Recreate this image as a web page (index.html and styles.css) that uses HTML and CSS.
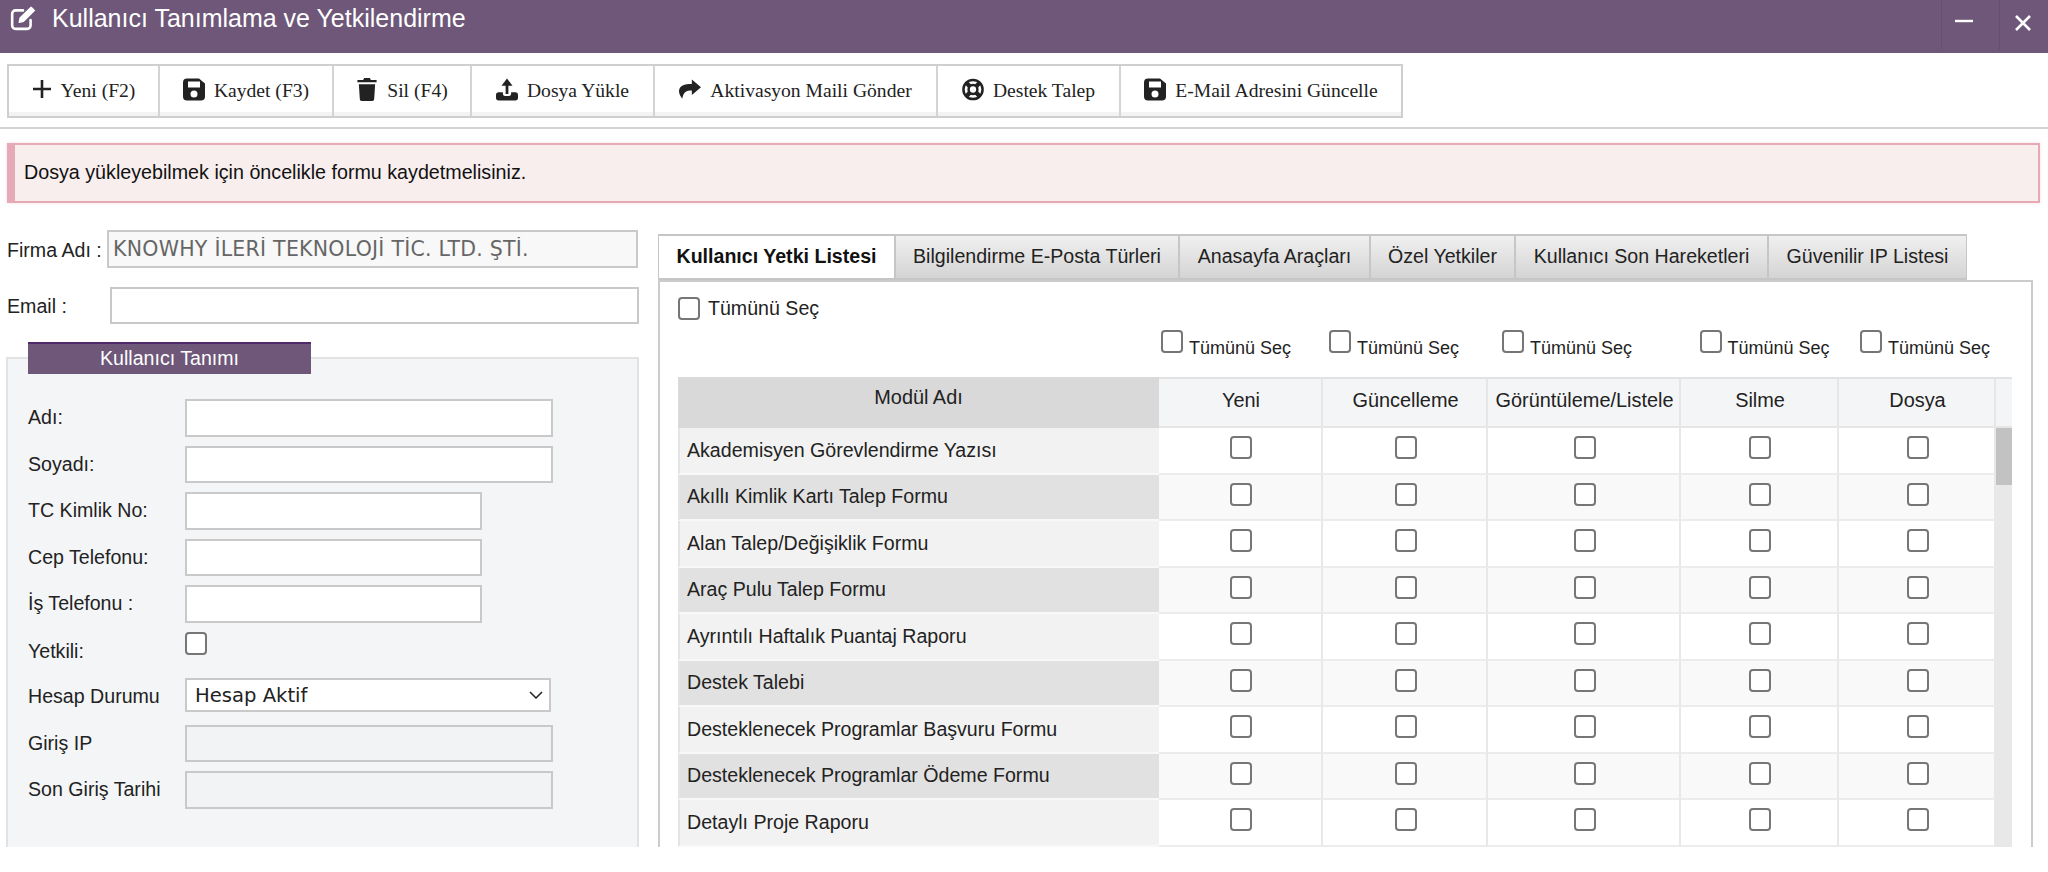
FILE: index.html
```html
<!DOCTYPE html>
<html lang="tr">
<head>
    <meta charset="UTF-8">
    <title>Kullanıcı Tanımlama ve Yetkilendirme</title>
    <link rel="stylesheet" href="styles.css">
</head>
<body>
<div class="page">
    <div class="title-bar">
        <svg class="title-icon" viewBox="0 0 24 24" fill="none" stroke="#fff" stroke-width="2.4" stroke-linecap="round" stroke-linejoin="round">
            <path d="M19 14v5a3 3 0 0 1-3 3H5a3 3 0 0 1-3-3V8a3 3 0 0 1 3-3h7"/>
            <path d="M8.5 16l.8-4L19.5 2l3 3L12.5 15z" fill="#fff" stroke-width="1.2"/>
        </svg>
        <span class="title-text">Kullanıcı Tanımlama ve Yetkilendirme</span>
        <div class="window-btns">
            <div class="window-btn"><svg viewBox="0 0 18 18" width="18" height="18"><path d="M0 9h18" stroke="#fff" stroke-width="2.4"/></svg></div>
            <div class="window-btn"><svg viewBox="0 0 16 16" width="16" height="16"><path d="M1 1l14 14M15 1L1 15" stroke="#fff" stroke-width="2.6"/></svg></div>
        </div>
    </div>

    <div class="toolbar">
        <a class="tool-btn">
            <svg class="ico ico-plus" viewBox="0 0 20 20"><path d="M10 1v18M1 10h18" stroke="#222" stroke-width="2.6"/></svg>
            Yeni (F2)
        </a>
        <a class="tool-btn">
            <svg class="ico" viewBox="0 0 22 22"><path fill="#222" fill-rule="evenodd" d="M4 0h12l6 5v13a4 4 0 0 1-4 4H4a4 4 0 0 1-4-4V4a4 4 0 0 1 4-4zm1 3v6h12V3zm6 9a3.500 3.500 0 1 0 0 7a3.500 3.500 0 0 0 0-7z"/></svg>
            Kaydet (F3)
        </a>
        <a class="tool-btn">
            <svg class="ico" viewBox="0 0 20 24"><path fill="#222" d="M7 0h6l1 2h6v2.500H0V2h6zM1.500 6.500h17L17.500 22a2 2 0 0 1-2 2h-11a2 2 0 0 1-2-2z"/></svg>
            Sil (F4)
        </a>
        <a class="tool-btn">
            <svg class="ico" viewBox="0 0 24 24"><path fill="#222" d="M12 0l6 8h-4.500v9h-3V8H6zM7.500 15v2a2 2 0 0 0 2 2h5a2 2 0 0 0 2-2v-2H21a3 3 0 0 1 3 3v3a3 3 0 0 1-3 3H3a3 3 0 0 1-3-3v-3a3 3 0 0 1 3-3z"/></svg>
            Dosya Yükle
        </a>
        <a class="tool-btn">
            <svg class="ico" viewBox="0 0 24 22"><path fill="#222" d="M14 0l10 8.500-10 8.500v-5c-6 0-9 1.500-10.500 9C1.500 18.500 0 15.500 0 13 0 7 6 5 14 5z"/></svg>
            Aktivasyon Maili Gönder
        </a>
        <a class="tool-btn">
            <svg class="ico" viewBox="0.500 0.500 23 23" fill="none" stroke="#222"><circle cx="12" cy="12" r="10" stroke-width="2.600"/><circle cx="12" cy="12" r="4.600" stroke-width="2.600"/><path d="M5 5l4 4M19 5l-4 4M5 19l4-4M19 19l-4-4" stroke-width="4.500"/></svg>
            Destek Talep
        </a>
        <a class="tool-btn">
            <svg class="ico" viewBox="0 0 22 22"><path fill="#222" fill-rule="evenodd" d="M4 0h12l6 5v13a4 4 0 0 1-4 4H4a4 4 0 0 1-4-4V4a4 4 0 0 1 4-4zm1 3v6h12V3zm6 9a3.500 3.500 0 1 0 0 7a3.500 3.500 0 0 0 0-7z"/></svg>
            E-Mail Adresini Güncelle
        </a>
    </div>

    <div class="divider"></div>

    <div class="alert">Dosya yükleyebilmek için öncelikle formu kaydetmelisiniz.</div>

    <div class="content">
        <div class="left-col">
            <div class="company-row">
                <label class="company-label">Firma Adı :</label>
                <input class="field field-company" type="text" value="KNOWHY İLERİ TEKNOLOJİ TİC. LTD. ŞTİ." readonly>
            </div>
            <div class="email-row">
                <label class="email-label">Email :</label>
                <input class="field field-email" type="text">
            </div>

            <fieldset class="user-panel">
                <legend class="user-legend">Kullanıcı Tanımı</legend>
                <div class="form-row"><label>Adı:</label><input class="field field-long" type="text"></div>
                <div class="form-row"><label>Soyadı:</label><input class="field field-long" type="text"></div>
                <div class="form-row"><label>TC Kimlik No:</label><input class="field field-short" type="text"></div>
                <div class="form-row"><label>Cep Telefonu:</label><input class="field field-short" type="text"></div>
                <div class="form-row"><label>İş Telefonu :</label><input class="field field-short" type="text"></div>
                <div class="form-row form-row-check"><label>Yetkili:</label><input class="check" type="checkbox"></div>
                <div class="form-row form-row-select">
                    <label>Hesap Durumu</label>
                    <div class="select-box">
                        <span>Hesap Aktif</span>
                        <svg viewBox="0 0 14 8" width="14" height="8"><path d="M1 1l6 6 6-6" fill="none" stroke="#222" stroke-width="1.500"/></svg>
                    </div>
                </div>
                <div class="form-row"><label>Giriş IP</label><input class="field field-long field-off" type="text" disabled></div>
                <div class="form-row"><label>Son Giriş Tarihi</label><input class="field field-long field-off" type="text" disabled></div>
            </fieldset>
        </div>

        <div class="right-col">
            <div class="tabs">
                <div class="tab active">Kullanıcı Yetki Listesi</div>
                <div class="tab">Bilgilendirme E-Posta Türleri</div>
                <div class="tab">Anasayfa Araçları</div>
                <div class="tab">Özel Yetkiler</div>
                <div class="tab">Kullanıcı Son Hareketleri</div>
                <div class="tab">Güvenilir IP Listesi</div>
            </div>
            <div class="tab-panel">
                <label class="select-all"><input class="check" type="checkbox"> Tümünü Seç</label>
                <div class="column-selects">
                    <label><input class="check" type="checkbox"><span>Tümünü Seç</span></label>
                    <label><input class="check" type="checkbox"><span>Tümünü Seç</span></label>
                    <label><input class="check" type="checkbox"><span>Tümünü Seç</span></label>
                    <label><input class="check" type="checkbox"><span>Tümünü Seç</span></label>
                    <label><input class="check" type="checkbox"><span>Tümünü Seç</span></label>
                </div>

                <table class="perm-table">
                    <colgroup>
                        <col class="col-name"><col class="col-a"><col class="col-b"><col class="col-c"><col class="col-d"><col class="col-e"><col class="col-bar">
                    </colgroup>
                    <thead>
                        <tr>
                            <th class="name-head">Modül Adı</th>
                            <th>Yeni</th><th>Güncelleme</th><th>Görüntüleme/Listele</th><th>Silme</th><th>Dosya</th><th></th>
                        </tr>
                    </thead>
                    <tbody>
                        <tr>
                            <td class="name">Akademisyen Görevlendirme Yazısı</td>
                            <td><input class="check" type="checkbox"></td><td><input class="check" type="checkbox"></td><td><input class="check" type="checkbox"></td><td><input class="check" type="checkbox"></td><td><input class="check" type="checkbox"></td>
                            <td class="scroll-track" rowspan="10"><div class="scroll-thumb"></div></td>
                        </tr>
                        <tr>
                            <td class="name">Akıllı Kimlik Kartı Talep Formu</td>
                            <td><input class="check" type="checkbox"></td><td><input class="check" type="checkbox"></td><td><input class="check" type="checkbox"></td><td><input class="check" type="checkbox"></td><td><input class="check" type="checkbox"></td>
                        </tr>
                        <tr>
                            <td class="name">Alan Talep/Değişiklik Formu</td>
                            <td><input class="check" type="checkbox"></td><td><input class="check" type="checkbox"></td><td><input class="check" type="checkbox"></td><td><input class="check" type="checkbox"></td><td><input class="check" type="checkbox"></td>
                        </tr>
                        <tr>
                            <td class="name">Araç Pulu Talep Formu</td>
                            <td><input class="check" type="checkbox"></td><td><input class="check" type="checkbox"></td><td><input class="check" type="checkbox"></td><td><input class="check" type="checkbox"></td><td><input class="check" type="checkbox"></td>
                        </tr>
                        <tr>
                            <td class="name">Ayrıntılı Haftalık Puantaj Raporu</td>
                            <td><input class="check" type="checkbox"></td><td><input class="check" type="checkbox"></td><td><input class="check" type="checkbox"></td><td><input class="check" type="checkbox"></td><td><input class="check" type="checkbox"></td>
                        </tr>
                        <tr>
                            <td class="name">Destek Talebi</td>
                            <td><input class="check" type="checkbox"></td><td><input class="check" type="checkbox"></td><td><input class="check" type="checkbox"></td><td><input class="check" type="checkbox"></td><td><input class="check" type="checkbox"></td>
                        </tr>
                        <tr>
                            <td class="name">Desteklenecek Programlar Başvuru Formu</td>
                            <td><input class="check" type="checkbox"></td><td><input class="check" type="checkbox"></td><td><input class="check" type="checkbox"></td><td><input class="check" type="checkbox"></td><td><input class="check" type="checkbox"></td>
                        </tr>
                        <tr>
                            <td class="name">Desteklenecek Programlar Ödeme Formu</td>
                            <td><input class="check" type="checkbox"></td><td><input class="check" type="checkbox"></td><td><input class="check" type="checkbox"></td><td><input class="check" type="checkbox"></td><td><input class="check" type="checkbox"></td>
                        </tr>
                        <tr>
                            <td class="name">Detaylı Proje Raporu</td>
                            <td><input class="check" type="checkbox"></td><td><input class="check" type="checkbox"></td><td><input class="check" type="checkbox"></td><td><input class="check" type="checkbox"></td><td><input class="check" type="checkbox"></td>
                        </tr>
                        <tr>
                            <td class="name"></td>
                            <td></td><td></td><td></td><td></td><td></td>
                        </tr>
                    </tbody>
                </table>
            </div>
        </div>
    </div>
</div>
</body>
</html>
```

FILE: styles.css
```css
html, body {
    margin: 0;
    padding: 0;
    background-color: #fff;
}
body {
    font-family: "Liberation Sans", Arial, sans-serif;
    font-size: 19.6px;
    color: #222;
}
.page {
    height: 847px;
    overflow: hidden;
}

/* title bar */
.title-bar {
    display: flex;
    height: 53px;
    background-color: #6e5779;
    color: #fff;
}
.title-icon {
    width: 26px;
    height: 26px;
    margin: 5px 0 0 10px;
}
.title-text {
    margin: 3px 0 0 16px;
    font-size: 25px;
    line-height: 30px;
}
.window-btns {
    display: flex;
    margin-left: auto;
    height: 50px;
}
.window-btn {
    box-sizing: border-box;
    width: 58px;
    height: 50px;
    padding: 12px 0 0 13px;
    border-left: 1px solid #65506f;
}
.window-btn:last-child {
    width: 49px;
    padding: 13px 0 0 15px;
}

/* toolbar */
.toolbar {
    display: inline-grid;
    grid-template-columns: 151px 174px 138px 183px 283px 183px 280px;
    height: 54px;
    margin: 11px 0 0 7px;
    box-sizing: border-box;
    border: 2px solid #cfcfcf;
    vertical-align: top;
}
.tool-btn {
    display: flex;
    justify-content: center;
    align-items: center;
    gap: 9px;
    font-family: "Liberation Serif", "Times New Roman", serif;
    font-size: 19.6px;
    color: #222;
    border-right: 2px solid #d4d4d4;
    box-shadow: inset 0 -4px 0 #f3f3f3;
}
.tool-btn:last-child {
    border-right: none;
}
.ico {
    width: 22px;
    height: 23px;
    margin-bottom: 4px;
}
.ico-plus {
    width: 20px;
    height: 20px;
}
.divider {
    height: 2px;
    margin-top: 9px;
    background-color: #d2d2d2;
}
.alert {
    display: flex;
    align-items: center;
    box-sizing: border-box;
    height: 60px;
    margin: 14px 8px 0 7px;
    padding: 0 0 2px 9px;
    background-color: #f8eeee;
    border: 2px solid #e5aab5;
    border-left-width: 8px;
    font-size: 19.7px;
    color: #111;
    box-shadow: 0 0 3px rgba(229, 170, 181, 0.4);
}

/* main area */
.content {
    display: flex;
    margin-top: 27px;
    padding-left: 6px;
}
.left-col {
    width: 633px;
    flex-shrink: 0;
}
.right-col {
    width: 1375px;
    margin-left: 19px;
    margin-top: 4px;
}
.field {
    box-sizing: border-box;
    height: 37.5px;
    border: 2px solid #c9c9c9;
    background-color: #fff;
    font-family: "DejaVu Sans", sans-serif;
    font-size: 20.5px;
    padding: 0 4px;
    margin: 0;
    border-radius: 0;
    outline: none;
}
.company-row, .email-row {
    display: flex;
    align-items: center;
}
.company-label {
    width: 100px;
    padding: 3px 0 0 1px;
}
.email-label {
    width: 103px;
    padding: 3px 0 0 1px;
}
.field-company {
    width: 531px;
    background-color: #f8f8f8;
    color: #666;
    letter-spacing: 0.25px;
}
.field-email {
    width: 530px;
}
.email-row {
    margin-top: 19px;
}

/* Kullanici Tanimi */
.user-panel {
    margin: 18px 0 0 0;
    padding: 25px 20px 0;
    border: 2px solid #e2e2e2;
    background-color: #f4f5f7;
    min-height: 520px;
}
.user-legend {
    display: flex;
    justify-content: center;
    box-sizing: border-box;
    width: 283px;
    height: 32px;
    padding: 0;
    background-color: #6e5779;
    border-top: 2px solid #4f2a6b;
    color: #fff;
    line-height: 28px;
}
.form-row {
    display: flex;
    align-items: center;
    height: 37.5px;
    margin-bottom: 9px;
}
.form-row label {
    width: 157px;
    flex-shrink: 0;
}
.field-long {
    width: 368px;
}
.field-short {
    width: 297px;
}
.field-off {
    background-color: #f2f3f5;
}
.form-row-check .check {
    align-self: flex-start;
}
.form-row-check label {
    padding-top: 2px;
}
.form-row-select {
    align-items: flex-start;
}
.form-row-select label {
    padding-top: 7px;
}
.select-box {
    display: flex;
    justify-content: space-between;
    align-items: center;
    box-sizing: border-box;
    width: 366px;
    height: 34px;
    padding: 0 6px 0 8px;
    background-color: #fff;
    border: 2px solid #c9c9c9;
    font-family: "DejaVu Sans", sans-serif;
    font-size: 19.6px;
}
.check {
    appearance: none;
    box-sizing: border-box;
    width: 22px;
    height: 23px;
    margin: 0;
    border: 2px solid #767676;
    border-radius: 4px;
    background-color: #fff;
}

/* tabs */
.tabs {
    display: grid;
    grid-template-columns: 237px 284px 191px 145px 253px 199px;
    height: 46px;
}
.tab {
    display: flex;
    justify-content: center;
    align-items: center;
    box-sizing: border-box;
    height: 46px;
    padding-bottom: 2px;
    border: 2px solid #c6c6c6;
    border-right-width: 1px;
    border-left-width: 1px;
    background: linear-gradient(#f0f0f0, #d4d4d4);
    white-space: nowrap;
}
.tab.active {
    background: #fff;
    font-weight: bold;
    color: #111;
}
.tab-panel {
    box-sizing: border-box;
    height: 600px;
    border: 2px solid #cccccc;
    padding: 15px 18px 0;
}
.select-all {
    display: flex;
    align-items: center;
    gap: 8px;
    height: 23px;
}
.column-selects {
    display: grid;
    grid-template-columns: 168px 173px 197.5px 160.5px 150px;
    margin: 10px 0 0 483px;
    height: 47px;
    font-size: 18px;
}
.column-selects label {
    display: flex;
    gap: 6px;
    white-space: nowrap;
}
.column-selects span {
    margin-top: 8px;
}

/* table */
.perm-table {
    table-layout: fixed;
    width: 1334px;
    border-collapse: separate;
    border-spacing: 0;
}
.col-name { width: 481px; }
.col-a { width: 164px; }
.col-b { width: 165px; }
.col-c { width: 193px; }
.col-d { width: 158px; }
.col-e { width: 157px; }
.col-bar { width: 16px; }
.perm-table th {
    box-sizing: border-box;
    height: 51px;
    padding: 0 0 4px 2px;
    font-size: 19.9px;
    font-weight: normal;
    text-align: center;
    background-color: #f4f5f7;
    border-top: 2px solid #e2e2e2;
    border-right: 2px solid #e6e6e6;
    border-bottom: 2px solid #e6e6e6;
}
.perm-table th:last-child {
    border-right: none;
}
.perm-table th.name-head {
    background-color: #d9d9d9;
    border-color: #d9d9d9;
    padding-bottom: 10px;
}
.perm-table td {
    box-sizing: border-box;
    height: 46.5px;
    padding: 0 0 0 2px;
    text-align: center;
    background-color: #fff;
    border-right: 2px solid #e8e8e8;
    border-bottom: 2px solid #ececec;
}
.perm-table tbody tr:nth-child(even) td {
    background-color: #f9f9f9;
}
.perm-table td.name {
    padding: 0 0 0 7px;
    text-align: left;
    background-color: #f2f2f2;
    border-left: 2px solid #e4e4e4;
    border-right: none;
    border-bottom-color: #f8f8f8;
}
.perm-table tbody tr:nth-child(even) td.name {
    background-color: #e1e1e1;
}
.perm-table td.scroll-track {
    padding: 0;
    vertical-align: top;
    background-color: #e8e8e8;
    border: none;
}
.scroll-thumb {
    height: 57px;
    background-color: #c2c2c2;
}
```
